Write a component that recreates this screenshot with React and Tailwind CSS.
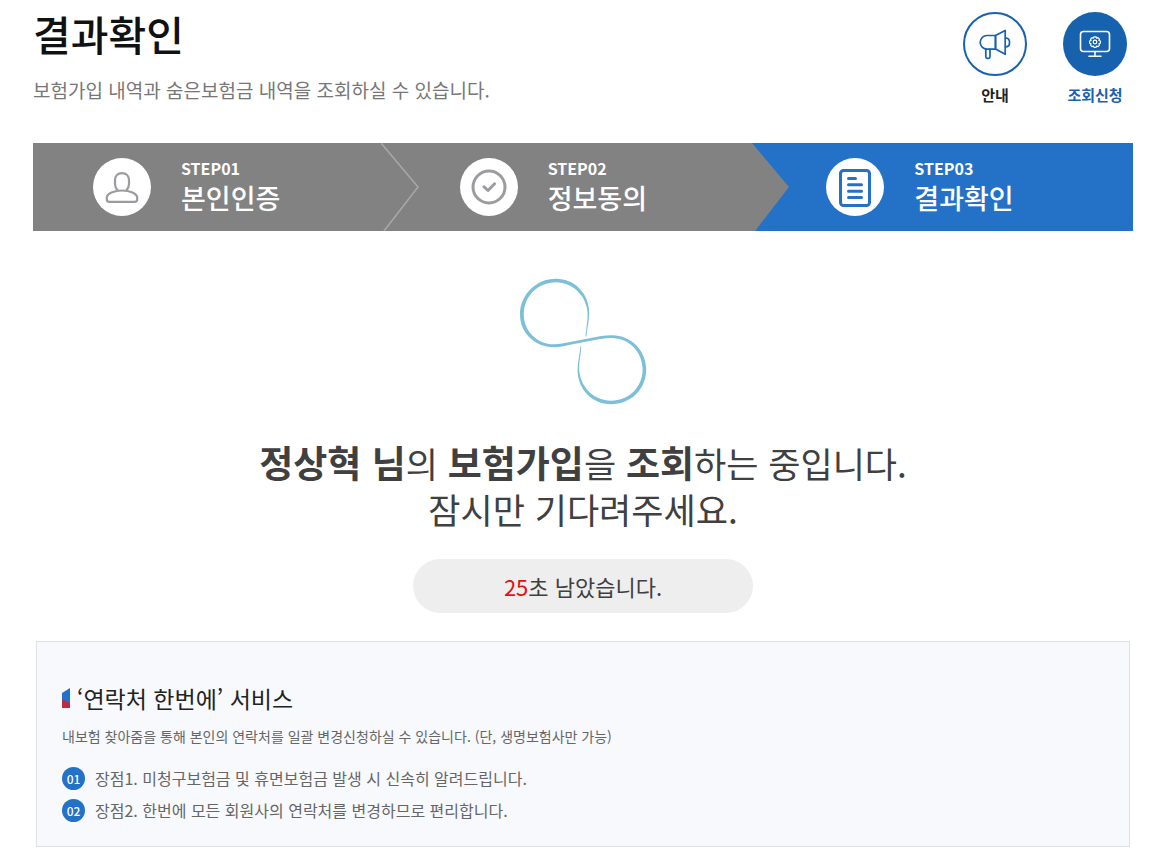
import React from "react";

function MegaphoneIcon() {
  return (
    <svg viewBox="0 0 64 64" className="size-16 shrink-0" fill="none" stroke="#1762ae" strokeWidth="1.7" strokeLinejoin="round" strokeLinecap="round" aria-hidden="true">
      <path d="M32.5 23.5H24a6.8 6.8 0 0 0 0 13.6h8.500z" />
      <path d="M32.500 23.500 42.200 18.500v23.800L32.500 37z" />
      <path d="M42.500 26c5.400 0 5.400 8.800 0 8.800" />
      <path d="M22.800 37.400v7.400q0 1.500 1.500 1.500h1.200q1.500 0 1.500-1.500v-7.400" />
    </svg>
  );
}

function MonitorIcon() {
  return (
    <svg viewBox="0 0 64 64" className="size-16" fill="none" stroke="#fff" strokeWidth="1.6" strokeLinejoin="round" strokeLinecap="round" aria-hidden="true">
      <rect x="17.500" y="19.500" width="29" height="20" rx="3" />
      <path d="M32 40v4M26 44.300h12" />
      <g strokeWidth="1.200">
        <path d="M30.900 24.800h2.200l.5 1.400 1.400-.6 1.500 1.500-.6 1.400 1.500.5v2.200l-1.500.5.600 1.400-1.500 1.500-1.400-.6-.5 1.400h-2.200l-.5-1.400-1.400.6-1.500-1.500.6-1.400-1.500-.5v-2.200l1.500-.5-.6-1.400 1.500-1.500 1.400.6z" />
        <circle cx="32" cy="30" r="1.800" />
      </g>
    </svg>
  );
}

function PersonIcon() {
  return (
    <svg viewBox="0 0 58 58" className="size-full" fill="none" stroke="#9b9ca0" strokeWidth="2.200" strokeLinejoin="round" aria-hidden="true">
      <path d="M24.800 32.600c-1.800-1.800-2.800-4.300-2.800-6.600v-3.800c0-4.300 2.800-7.100 7-7.100s7 2.800 7 7.100V26c0 2.300-1 4.800-2.800 6.600" />
      <path d="M16.500 43.900h25c1.800 0 2.700-.9 2.700-2.700v-1.700c0-4-7.600-7-15.200-7s-15.200 3-15.200 7v1.700c0 1.800.9 2.700 2.700 2.700z" />
    </svg>
  );
}

function CheckIcon() {
  return (
    <svg viewBox="0 0 58 58" className="size-full" fill="none" stroke="#9b9ca0" strokeWidth="3" strokeLinecap="round" strokeLinejoin="round" aria-hidden="true">
      <circle cx="29" cy="29" r="16" />
      <path d="m24 28.800 4 3.700 6.600-6.700" />
    </svg>
  );
}

function DocumentIcon() {
  return (
    <svg viewBox="0 0 58 58" className="size-full" fill="none" stroke="#2472c8" strokeWidth="3" strokeLinecap="round" aria-hidden="true">
      <rect x="14.500" y="12.500" width="29" height="35" rx="3" />
      <path d="M22.500 20.500h7M22.500 26.800h13M22.500 33.200h13M22.500 39.500h13" />
    </svg>
  );
}

function LineArrow() {
  return (
    <svg viewBox="0 0 38 88" className="absolute top-0 -left-[19px] h-[88px] w-[38px]" fill="none" aria-hidden="true">
      <path d="M0 0 37 44 3 88" stroke="#a8a8a8" strokeWidth="1.500" />
    </svg>
  );
}

function SolidArrow() {
  return (
    <svg viewBox="0 0 38 88" className="absolute top-0 -left-[14px] h-[88px] w-[38px]" aria-hidden="true">
      <path d="M0 0h38v88H0z" fill="#2472c8" />
      <path d="M0 0 37 44 3 88H0z" fill="#828282" />
    </svg>
  );
}

function Spinner() {
  return (
    <svg viewBox="0 0 130 130" className="size-[130px]" fill="#7bbfd9" aria-hidden="true">
      <path d="M38 1.800C57 1.800 71.200 17 71.200 36C71.200 44 69 52 68.300 59.500H67.400C68 52 70 43 69.600 36C68.500 19 55 5.200 38 5.200C20 5.200 5.800 19 5.800 37.500C5.800 54 19 67.300 36 67.300C42 67.300 46 66.200 52 65L82 59.200C86 58.400 90 58.200 94 58.200C113 58.200 128.200 73.500 128.200 92.500C128.200 112 113 127.200 93 127.200C74 127.200 59.600 112 59.600 93C59.600 85 61.800 77 62.400 69.500H63.300C63 77 60.800 85 61.200 92.500C62 110 76 123.700 93 123.700C111 123.700 124.600 110 124.600 92.500C124.600 75 111 60.900 94 60.900C90 60.900 86 61.200 82 62L52 67.800C46 69 42 70.200 36 70.200C17 70.200 2 56 2 37.500C2 18 18 1.800 38 1.800Z" />
    </svg>
  );
}

const steps = [
  { no: "STEP01", name: "본인인증", Icon: PersonIcon },
  { no: "STEP02", name: "정보동의", Icon: CheckIcon, Arrow: LineArrow },
  { no: "STEP03", name: "결과확인", Icon: DocumentIcon, Arrow: SolidArrow, current: true },
];

const benefits = [
  { no: "01", text: "장점1. 미청구보험금 및 휴면보험금 발생 시 신속히 알려드립니다." },
  { no: "02", text: "장점2. 한번에 모든 회원사의 연락처를 변경하므로 편리합니다." },
];

export default function App() {
  return (
    <main lang="ko" className="bg-white pr-[23px] pl-[33px] font-['Noto_Sans_CJK_KR',sans-serif] text-[#404040]">
      <header className="flex items-start justify-between">
        <div className="pt-2">
          <h1 className="text-[41px] leading-[50px] font-medium text-[#111]">결과확인</h1>
          <p className="mt-4 text-[19px] leading-8 text-[#777]">보험가입 내역과 숨은보험금 내역을 조회하실 수 있습니다.</p>
        </div>
        <nav className="flex pt-3 text-[15px] leading-6 font-bold">
          <a href="#guide" className="flex w-[100px] flex-col items-center gap-[7px] text-[#222]">
            <span className="flex size-16 items-center justify-center rounded-full border-2 border-[#1762ae]"><MegaphoneIcon /></span>
            안내
          </a>
          <a href="#request" className="-mr-3 flex w-[100px] flex-col items-center gap-[7px] text-[#1762ae]">
            <span className="flex size-16 items-center justify-center rounded-full bg-[#1762ae]"><MonitorIcon /></span>
            조회신청
          </a>
        </nav>
      </header>

      <ol className="mt-9 grid grid-cols-3 text-white">
        {steps.map(({ no, name, Icon, Arrow, current }) => (
          <li
            key={no}
            aria-current={current ? "step" : undefined}
            className={`relative flex h-[88px] items-center gap-[30px] pl-15 ${current ? "bg-[#2472c8]" : "bg-[#828282]"}`}
          >
            {Arrow && <Arrow />}
            <span className="size-[58px] shrink-0 rounded-full bg-white"><Icon /></span>
            <div className="pb-[2px]">
              <p className="text-[16px] leading-6 font-bold">{no}</p>
              <p className="text-[27px] leading-9 font-medium">{name}</p>
            </div>
          </li>
        ))}
      </ol>

      <section className="mt-[46px] flex flex-col items-center text-center" role="status">
        <Spinner />
        <p className="mt-8 text-[35px] leading-[46px]">
          <strong className="text-[37px] font-bold">정상혁 님</strong>의 <strong className="text-[37px] font-bold">보험가입</strong>을{" "}
          <strong className="text-[37px] font-bold">조회</strong>하는 중입니다.
          <br />
          잠시만 기다려주세요.
        </p>
        <p className="mt-[27px] w-[340px] rounded-full bg-[#eee] text-[22px] leading-[54px]">
          <span className="text-[#e60f14]">25</span>초 남았습니다.
        </p>
      </section>

      <section className="mx-[3px] mt-7 border border-[#dfe1e3] bg-[#f7f9fd] px-[25px] pt-10 pb-6 text-[#666]">
        <h2 className="flex items-center gap-[7px] text-[23px] leading-8 text-[#222]">
          <svg viewBox="0 0 8 20" className="h-5 w-2" aria-hidden="true">
            <path d="M8 0v20H0V5z" fill="#2472c8" />
            <path d="M0 11l8 4v5H0z" fill="#bd2a43" />
          </svg>
          ‘연락처 한번에’ 서비스
        </h2>
        <p className="mt-[10px] text-[14px] leading-6">내보험 찾아줌을 통해 본인의 연락처를 일괄 변경신청하실 수 있습니다. (단, 생명보험사만 가능)</p>
        <ul className="mt-[18px] flex flex-col gap-2">
          {benefits.map(({ no, text }) => (
            <li key={no} className="flex items-center gap-[10px] text-[16px] leading-6">
              <span className="size-[23px] rounded-full bg-[#2472c8] text-center text-[12px] leading-[23px] font-medium text-white">{no}</span>
              {text}
            </li>
          ))}
        </ul>
      </section>
    </main>
  );
}
